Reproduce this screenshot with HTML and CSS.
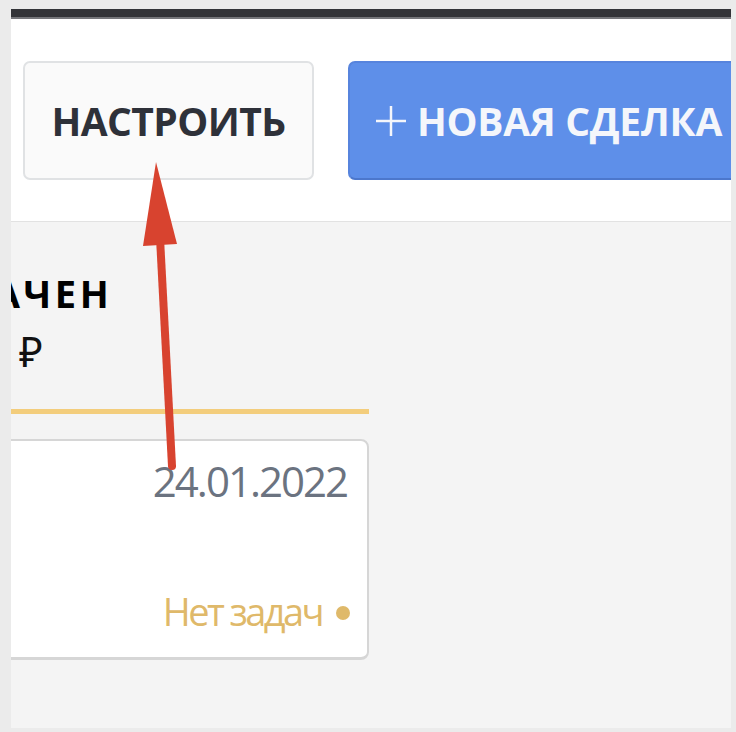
FILE: index.html
```html
<!DOCTYPE html>
<html lang="ru">

<head>
    <meta charset="UTF-8">
    <meta name="viewport" content="width=device-width, initial-scale=1.0">
    <title>Сделки</title>
    <link rel="stylesheet" href="styles.css">
</head>

<body>
    <div class="screen">
        <div class="topbar"></div>

        <!-- Header with actions -->
        <div class="header">
            <button class="btn btn-setup">НАСТРОИТЬ</button>
            <button class="btn btn-new">
                <svg class="plus" viewBox="0 0 30 30" width="30" height="30">
                    <line x1="15" y1="0" x2="15" y2="30" />
                    <line x1="0" y1="15" x2="30" y2="15" />
                </svg>
                <span>НОВАЯ СДЕЛКА</span>
            </button>
        </div>

        <!-- Pipeline board -->
        <div class="board">
            <div class="column">
                <div class="column-title">ОПЛАЧЕН</div>
                <div class="column-sum">₽</div>
                <div class="column-line"></div>

                <div class="card">
                    <div class="card-date">24.01.2022</div>
                    <div class="card-tasks">Нет задач <span class="dot"></span></div>
                </div>
            </div>
        </div>
    </div>

    <!-- Annotation arrow -->
    <svg class="arrow" viewBox="0 0 736 732" width="736" height="732">
        <line x1="172" y1="466" x2="160" y2="238" />
        <polygon points="156,162 143,246 177,244" />
    </svg>
</body>

</html>
```

FILE: styles.css
```css
body {
    margin: 0;
    background-color: #ebebeb;
    font-family: "Open Sans", "Noto Sans", "DejaVu Sans", sans-serif;
}

.screen {
    width: 720px;
    height: 719px;
    margin: 9px 0 0 11px;
    background-color: #f4f4f4;
    overflow: hidden;
    display: flex;
    flex-direction: column;
}

.topbar {
    height: 8px;
    background-color: #333438;
    border-bottom: 2px solid #75767a;
    flex-shrink: 0;
}

.header {
    height: 160px;
    padding: 42px 0 0 12px;
    background-color: #fff;
    border-bottom: 1px solid #e2e2e2;
    display: flex;
    align-items: flex-start;
    gap: 34px;
    flex-shrink: 0;
}

.btn {
    height: 119px;
    border-radius: 7px;
    font-family: inherit;
    font-size: 39px;
    font-weight: 700;
    display: flex;
    align-items: center;
    white-space: nowrap;
    flex-shrink: 0;
    padding: 0;
}

.btn-setup {
    width: 291px;
    justify-content: center;
    background-color: #fafafa;
    border: 2px solid #e0e2e4;
    color: #2e3139;
    letter-spacing: -0.6px;
}

.btn-new {
    padding: 0 30px 0 26px;
    gap: 11px;
    background-color: #5e8fe9;
    border: 2px solid #5784dd;
    border-bottom-color: #4c77cc;
    color: #f4f6fb;
    letter-spacing: -0.3px;
}

.plus {
    display: block;
}

.plus line {
    stroke: #f4f6fb;
    stroke-width: 2.5;
}

.board {
    flex: 1;
    padding-top: 52px;
}

.column {
    width: 486px;
    margin-left: -128px;
}

.column-title {
    padding-left: 13px;
    font-size: 38px;
    line-height: 1;
    font-weight: 700;
    letter-spacing: 3.6px;
    color: #000;
}

.column-sum {
    margin-top: 19px;
    padding-left: 136px;
    font-size: 41px;
    line-height: 1;
    color: #111;
}

.column-line {
    height: 5px;
    margin-top: 37px;
    background-color: #f3cd7c;
}

.card {
    height: 221px;
    margin-top: 25px;
    padding: 19px 20px 27px 18px;
    box-sizing: border-box;
    background-color: #fff;
    border: 2px solid #d6d6d6;
    border-bottom-width: 3px;
    border-radius: 8px;
    display: flex;
    flex-direction: column;
    justify-content: space-between;
    align-items: flex-end;
}

.card-date {
    font-size: 42px;
    line-height: 1;
    letter-spacing: -2px;
    color: #6b7380;
}

.card-tasks {
    margin-right: -3px;
    font-size: 38px;
    line-height: 1;
    letter-spacing: -2.6px;
    color: #dfb96a;
    display: flex;
    align-items: center;
}

.dot {
    width: 14px;
    height: 14px;
    margin-left: 14px;
    margin-top: 4px;
    border-radius: 50%;
    background-color: #dfb96a;
}

.arrow {
    position: absolute;
    top: 0;
    left: 0;
    pointer-events: none;
}

.arrow line {
    stroke: #d8432f;
    stroke-width: 8;
    stroke-linecap: round;
}

.arrow polygon {
    fill: #d8432f;
}
```
